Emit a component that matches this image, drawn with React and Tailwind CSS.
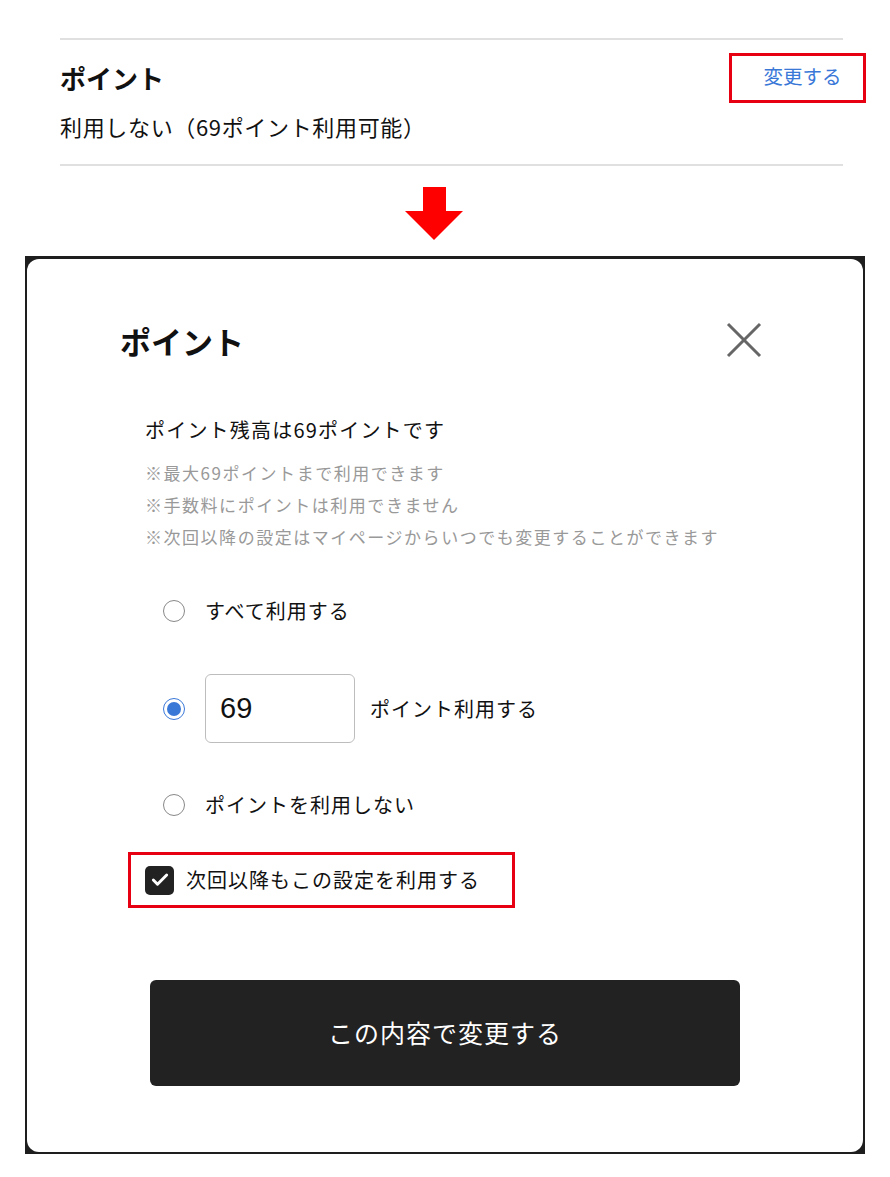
import { useState } from "react";
import { Check } from "lucide-react";

const font = { fontFamily: '"Noto Sans CJK JP", "Noto Sans", sans-serif' };

const Radio = ({ checked, onClick }) => (
  <button
    onClick={onClick}
    className={`w-[22px] h-[22px] rounded-full border-[1.5px] flex items-center justify-center shrink-0 bg-white ${
      checked ? "border-[#3a78d8]" : "border-[#888]"
    }`}
  >
    {checked && <span className="w-[14px] h-[14px] rounded-full bg-[#3a78d8]" />}
  </button>
);

export default function App() {
  const [mode, setMode] = useState("some");
  const [points, setPoints] = useState("69");
  const [keep, setKeep] = useState(true);

  return (
    <div style={font} className="w-[890px] h-[1177px] bg-white overflow-hidden text-[#111]">
      {/* summary row */}
      <div className="pt-[38px] px-[60px] pr-[47px]">
        <div className="h-[2px] bg-[#e0e0e0]" />
        <div className="flex justify-between items-start">
          <div>
            <h2 className="text-[26px] font-bold leading-none mt-[25px]">ポイント</h2>
            <p className="text-[22px] leading-none mt-[24px] tracking-[0.03em]">利用しない（69ポイント利用可能）</p>
          </div>
          <div className="mt-[13px] mr-[-23px] w-[137px] h-[50px] border-[3px] border-[#e60012] flex items-center justify-center pl-[10px] pb-[5px]">
            <span className="text-[19.5px] text-[#3a78d8]">変更する</span>
          </div>
        </div>
        <div className="h-[2px] bg-[#e0e0e0] mt-[27px]" />
      </div>

      {/* arrow */}
      <div className="flex flex-col items-center mt-[21px] ml-[-22px]">
        <div className="w-[23px] h-[24px] bg-[#ff0000]" />
        <div className="w-0 h-0 border-l-[29px] border-r-[29px] border-t-[29px] border-l-transparent border-r-transparent border-t-[#ff0000]" />
      </div>

      {/* modal over overlay */}
      <div className="mt-[16px] mx-[25px] bg-[#1e1e1e] px-[2px] pt-[3px] pb-[2px] h-[898px]">
        <div className="bg-white rounded-[12px] h-full pt-[63px]">
          <div className="flex items-center justify-between pl-[93px] pr-[101px]">
            <h1 className="text-[31px] font-bold leading-none">ポイント</h1>
            <button className="w-[36px] h-[36px]">
              <svg viewBox="0 0 36 36" width="36" height="36" stroke="#666" strokeWidth="3" fill="none">
                <line x1="2" y1="2" x2="34" y2="34" />
                <line x1="34" y1="2" x2="2" y2="34" />
              </svg>
            </button>
          </div>

          <div className="pl-[118px] mt-[62px]">
            <p className="text-[20px] leading-none tracking-[0.06em]">ポイント残高は69ポイントです</p>
            <div className="mt-[17px] text-[17px] leading-[32px] text-[#999] tracking-[0.09em]">
              <p>※最大69ポイントまで利用できます</p>
              <p>※手数料にポイントは利用できません</p>
              <p>※次回以降の設定はマイページからいつでも変更することができます</p>
            </div>
          </div>

          <div className="pl-[136px] mt-[38px] flex flex-col">
            <label className="flex items-center gap-[20px] h-[40px]" onClick={() => setMode("all")}>
              <Radio checked={mode === "all"} />
              <span className="text-[20px] tracking-[0.05em]">すべて利用する</span>
            </label>
            <label className="flex items-center mt-[43px]" onClick={() => setMode("some")}>
              <Radio checked={mode === "some"} />
              <input
                value={points}
                onChange={(e) => setPoints(e.target.value)}
                className="ml-[20px] w-[150px] h-[69px] border border-[#bdbdbd] rounded-[6px] px-[14px] text-[29px] outline-none"
                style={{ fontFamily: '"Liberation Sans", "Noto Sans", sans-serif' }}
              />
              <span className="ml-[15px] text-[20px] tracking-[0.05em]">ポイント利用する</span>
            </label>
            <label className="flex items-center gap-[20px] h-[40px] mt-[42px]" onClick={() => setMode("none")}>
              <Radio checked={mode === "none"} />
              <span className="text-[20px] tracking-[0.05em]">ポイントを利用しない</span>
            </label>
          </div>

          <div className="ml-[101px] mt-[27px] w-[387px] h-[56px] border-[3px] border-[#e60012] flex items-center pl-[14px]">
            <button
              onClick={() => setKeep(!keep)}
              className={`w-[29px] h-[29px] rounded-[5px] flex items-center justify-center ${keep ? "bg-[#222]" : "border border-[#888]"}`}
            >
              {keep && <Check size={20} strokeWidth={3.5} className="text-white" />}
            </button>
            <span className="ml-[12px] text-[20px] tracking-[0.05em]">次回以降もこの設定を利用する</span>
          </div>

          <div className="px-[123px] mt-[72px]">
            <button className="w-full h-[106px] bg-[#222] rounded-[6px] text-white text-[25px] tracking-[0.04em]">
              この内容で変更する
            </button>
          </div>
        </div>
      </div>
    </div>
  );
}
